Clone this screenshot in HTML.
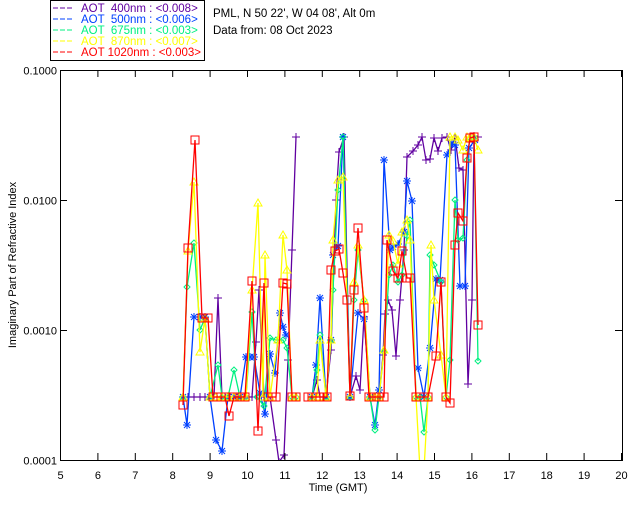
<!DOCTYPE html>
<html><head><meta charset="utf-8"><style>
html,body{margin:0;padding:0;background:#fff;}
svg{display:block;font-family:"Liberation Sans",sans-serif;}
.pre{white-space:pre;}
</style></head><body>
<svg id="s" width="640" height="512" viewBox="0 0 640 512" xmlns="http://www.w3.org/2000/svg">
<rect width="640" height="512" fill="#fff"/>
<rect x="50.5" y="0.5" width="154" height="60" fill="#fff" stroke="#000"/>
<g font-size="11.5">
<line x1="53" y1="8" x2="74" y2="8" stroke="#6000a0" stroke-dasharray="5,2"/>
<text class="pre" x="81" y="12" fill="#6000a0">AOT  400nm : &lt;0.008&gt;</text>
<line x1="53" y1="19" x2="74" y2="19" stroke="#0040ff" stroke-dasharray="5,2"/>
<text class="pre" x="81" y="23" fill="#0040ff">AOT  500nm : &lt;0.006&gt;</text>
<line x1="53" y1="30" x2="74" y2="30" stroke="#00f080" stroke-dasharray="5,2"/>
<text class="pre" x="81" y="34" fill="#00f080">AOT  675nm : &lt;0.003&gt;</text>
<line x1="53" y1="41" x2="74" y2="41" stroke="#ffff00" stroke-dasharray="5,2"/>
<text class="pre" x="81" y="45" fill="#ffff00">AOT  870nm : &lt;0.007&gt;</text>
<line x1="53" y1="52" x2="74" y2="52" stroke="#ff0000" stroke-dasharray="5,2"/>
<text class="pre" x="81" y="56" fill="#ff0000">AOT 1020nm : &lt;0.003&gt;</text>
<text x="213" y="17" fill="#000">PML, N 50 22', W 04 08', Alt 0m</text>
<text x="213" y="34" fill="#000">Data from: 08 Oct 2023</text>
</g>
<defs><clipPath id="c"><rect x="60" y="70" width="563" height="391"/></clipPath></defs>
<g id="data" clip-path="url(#c)"></g>
<g id="axes" stroke="#000" fill="none" stroke-width="1">
<path d="M60.5 70.5H622.5V460.5H60.5Z"/>
</g>
<g id="labels" font-size="11" fill="#000"></g>
<text x="338" y="491" font-size="11" text-anchor="middle">Time (GMT)</text>
<text transform="translate(16,265) rotate(-90)" font-size="11" text-anchor="middle">Imaginary Part of Refractive Index</text>
</svg>
<script>
var NS="http://www.w3.org/2000/svg";
function el(t,a,p){var e=document.createElementNS(NS,t);for(var k in a)e.setAttribute(k,a[k]);p.appendChild(e);return e;}
var ax=document.getElementById('axes'),lb=document.getElementById('labels');
for(var h=5;h<=20;h++){var x=60.5+37.4*(h-5);
 el('line',{x1:x,y1:70,x2:x,y2:77},ax);el('line',{x1:x,y1:460,x2:x,y2:453},ax);
 var t=el('text',{x:x,y:479,'text-anchor':'middle'},lb);t.textContent=h;}
var yl=[["0.1000",70.5],["0.0100",200.5],["0.0010",330.5],["0.0001",460.5]];
yl.forEach(function(v){el('line',{x1:60,y1:v[1],x2:67,y2:v[1]},ax);el('line',{x1:622,y1:v[1],x2:615,y2:v[1]},ax);
 var t=el('text',{x:57,y:v[1]+4,'text-anchor':'end'},lb);t.textContent=v[0];});
function P(s){return s.trim().split(/;\s*/).map(function(p){return p.split(',').map(Number);});}
var series=[
{c:"#6000a0",m:"plus",segs:[P("183,397;188,397;194,397;200,397;205,397;210,397;214,397;218,298;222,397;228,397;234,397;240,397;246,397;252,397;256,342;259,290;264,397;270,397;276,440;279,462;284,455;288,360;292,250;296,137"),
P("312,397;317,380;320,397;326,397;331,350;336,200;339,152;344,137;350,397;356,376;360,390;364,317;370,397;375,397;379,397;383,355;385,314;388,300;392,310;396,356;400,300;404,250;407,157;413,151;418,145;422,137;426,160;430,159;434,138;438,151;442,138;447,137;451,150;455,137;459,168;463,170;468,384;472,300;474,136;478,137")]},
{c:"#0040ff",m:"star",segs:[P("183,397;187,425;194,317;200,317;205,317;210,397;216,440;222,451;228,397;234,397;240,397;246,357;250,357;254,357;260,393;265,414;270,354;275,373;280,313;283,327;286,335"),
P("312,397;316,365;320,298;326,397;331,340;333,255;338,246;343,137;350,397;358,313;364,319;370,397;375,425;379,390;384,160;390,250;393,247;398,244;404,232;407,181;412,201;418,368;424,397;430,348;436,279;440,280;447,155;452,143;455,145;460,286;465,286;469,148;475,140")]},
{c:"#00f080",m:"dia",segs:[P("183,397;187,287;194,243;200,330;205,318;210,397;218,365;222,397;228,397;234,370;240,397;246,397;252,312;257,397;264,406;270,338;276,340;283,340;287,348;292,397;296,397"),
P("312,397;317,370;320,335;326,397;331,340;333,290;338,190;343,137;350,397;354,300;358,250;364,300;370,397;375,430;379,397;384,352;389,275;393,265;398,282;402,275;407,236;410,220;416,397;420,397;424,432;428,397;430,255;434,265;441,282;446,397;450,360;455,200;458,240;463,238;467,160;470,138;474,137;478,361")]},
{c:"#ffff00",m:"tri",segs:[P("183,397;188,251;194,182;200,352;205,318;210,397;216,397;222,397;228,397;234,397;240,397;246,397;252,290;258,203;263,397;265,255;270,397;278,340;283,235;287,270;292,397;296,397"),
P("312,397;317,397;320,340;326,397;331,340;333,240;338,180;343,177;350,397;354,282;358,245;364,300;370,397;375,397;379,397;384,350;389,235;393,241;398,264;402,232;407,220;410,240;416,397;420,470;424,470;428,397;431,245;434,300;441,355;446,397;450,137;455,137;458,140;463,150;467,137;470,138;474,137;478,150")]},
{c:"#ff0000",m:"sq",segs:[P("183,405;188,248;195,140;202,318;208,318;213,397;217,397;221,397;225,397;229,416;234,397;240,397;245,397;252,281;258,431;264,283;268,397;272,397;276,397;283,283;287,284;292,397;296,397"),
P("308,397;312,397;316,397;320,397;327,397;331,270;335,251;339,249;343,273;347,300;350,396;354,290;358,228;364,308;369,397;374,397;379,397;384,397;387,240;393,271;398,278;402,251;407,278;410,278;416,397;420,397;424,397;428,397;436,356;441,282;446,397;450,403;455,245;458,213;463,221;467,158;470,138;474,137;478,325")]}
];
var g=document.getElementById('data');
series.forEach(function(s){
 s.segs.forEach(function(pts){
  el('polyline',{points:pts.map(function(p){return p.join(',')}).join(' '),fill:'none',stroke:s.c,'stroke-width':1.3},g);
  pts.forEach(function(p){var x=p[0],y=p[1];
   if(s.m=="sq")el('rect',{x:x-4,y:y-4,width:8,height:8,fill:'none',stroke:s.c},g);
   else if(s.m=="plus")el('path',{d:'M'+(x-4)+' '+y+'h8M'+x+' '+(y-4)+'v8',stroke:s.c,fill:'none'},g);
   else if(s.m=="star")el('path',{d:'M'+(x-4)+' '+y+'h8M'+x+' '+(y-4)+'v8M'+(x-3)+' '+(y-3)+'l6 6M'+(x-3)+' '+(y+3)+'l6 -6',stroke:s.c,fill:'none'},g);
   else if(s.m=="dia")el('path',{d:'M'+x+' '+(y-3)+'l3 3l-3 3l-3 -3z',stroke:s.c,fill:'none'},g);
   else el('path',{d:'M'+x+' '+(y-4)+'l4 7h-8z',stroke:s.c,fill:'none'},g);
  });
 });
});
</script>
</body></html>
